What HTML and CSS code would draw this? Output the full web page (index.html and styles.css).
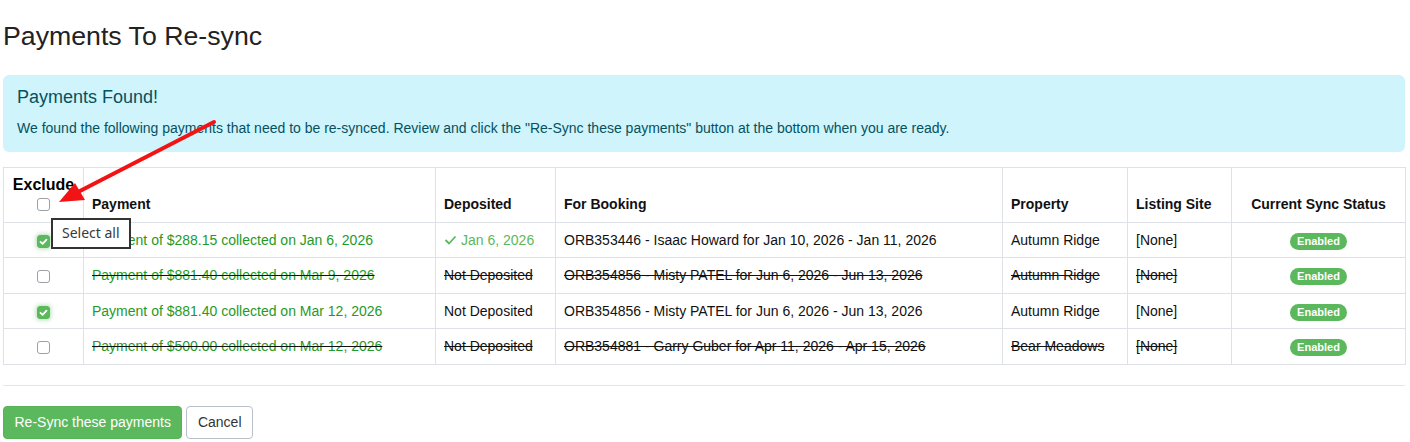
FILE: index.html
```html
<!DOCTYPE html>
<html lang="en">
<head>
<meta charset="utf-8">
<title>Payments To Re-sync</title>
<link rel="stylesheet" href="styles.css">
</head>
<body>
<div class="page">
  <h2 class="title">Payments To Re-sync</h2>

  <div class="alert">
    <h4 class="alert-heading">Payments Found!</h4>
    <p class="alert-text">We found the following payments that need to be re-synced. Review and click the "Re-Sync these payments" button at the bottom when you are ready.</p>
  </div>

  <table class="grid">
    <colgroup>
      <col class="c-ex"><col class="c-pay"><col class="c-dep"><col class="c-book"><col class="c-prop"><col class="c-site"><col class="c-stat">
    </colgroup>
    <thead>
      <tr>
        <th class="th-center"><span class="ex-label">Exclude</span><input type="checkbox" class="chk chk-head"></th>
        <th>Payment</th>
        <th>Deposited</th>
        <th>For Booking</th>
        <th>Property</th>
        <th>Listing Site</th>
        <th class="th-center">Current Sync Status</th>
      </tr>
    </thead>
    <tbody>
      <tr>
        <td class="td-center"><input type="checkbox" class="chk" checked></td>
        <td><span class="pay">Payment of $288.15 collected on Jan 6, 2026</span></td>
        <td><span class="dep-ok"><svg class="tick" width="13" height="10" viewBox="0 0 13 10"><polyline points="1.5,5 5,8.5 11.5,1.5" fill="none" stroke="currentColor" stroke-width="1.8"/></svg>Jan 6, 2026</span></td>
        <td>ORB353446 - Isaac Howard for Jan 10, 2026 - Jan 11, 2026</td>
        <td>Autumn Ridge</td>
        <td>[None]</td>
        <td class="td-center"><span class="badge">Enabled</span></td>
      </tr>
      <tr>
        <td class="td-center"><input type="checkbox" class="chk"></td>
        <td class="struck"><span class="pay">Payment of $881.40 collected on Mar 9, 2026</span></td>
        <td class="struck">Not Deposited</td>
        <td class="struck">ORB354856 - Misty PATEL for Jun 6, 2026 - Jun 13, 2026</td>
        <td class="struck">Autumn Ridge</td>
        <td class="struck">[None]</td>
        <td class="td-center"><span class="badge">Enabled</span></td>
      </tr>
      <tr>
        <td class="td-center"><input type="checkbox" class="chk" checked></td>
        <td><span class="pay">Payment of $881.40 collected on Mar 12, 2026</span></td>
        <td>Not Deposited</td>
        <td>ORB354856 - Misty PATEL for Jun 6, 2026 - Jun 13, 2026</td>
        <td>Autumn Ridge</td>
        <td>[None]</td>
        <td class="td-center"><span class="badge">Enabled</span></td>
      </tr>
      <tr>
        <td class="td-center"><input type="checkbox" class="chk"></td>
        <td class="struck"><span class="pay">Payment of $500.00 collected on Mar 12, 2026</span></td>
        <td class="struck">Not Deposited</td>
        <td class="struck">ORB354881 - Garry Guber for Apr 11, 2026 - Apr 15, 2026</td>
        <td class="struck">Bear Meadows</td>
        <td class="struck">[None]</td>
        <td class="td-center"><span class="badge">Enabled</span></td>
      </tr>
    </tbody>
  </table>

  <hr class="rule">

  <div class="actions">
    <button class="btn btn-success">Re-Sync these payments</button>
    <button class="btn btn-default">Cancel</button>
  </div>

  <div class="tooltip">Select all</div>

  <svg class="arrow" width="240" height="220" viewBox="0 0 240 220">
    <line x1="214" y1="122" x2="78" y2="192" stroke="#f21414" stroke-width="4" stroke-linecap="round"/>
    <polygon points="59,202 75,183 85,200" fill="#f21414"/>
  </svg>
</div>
</body>
</html>
```

FILE: styles.css
```css
* { box-sizing: border-box; }

html, body {
  margin: 0;
  padding: 0;
  background: #fff;
}

body {
  font-family: "Liberation Sans", Arial, sans-serif;
  font-size: 14px;
  line-height: 20px;
  color: #111;
}

.page {
  position: relative;
  padding: 21px 5px 0 3px;
}

.title {
  margin: 0 0 23px;
  font-size: 26.7px;
  line-height: 30.8px;
  font-weight: normal;
  color: #222;
}

.alert {
  background: #cff4fc;
  color: #055160;
  border-radius: 6px;
  padding: 13px 14px 14px;
  margin-bottom: 15px;
}

.alert-heading {
  margin: 0 0 10px;
  font-size: 18px;
  line-height: 1.1;
  font-weight: normal;
}

.alert-text {
  margin: 0;
  font-size: 14px;
  line-height: 20px;
}

.grid {
  width: 100%;
  border-collapse: collapse;
  table-layout: fixed;
  border: 1px solid #dee2e6;
}

.c-ex { width: 80px; }
.c-pay { width: 352px; }
.c-dep { width: 120px; }
.c-book { width: 447px; }
.c-prop { width: 125px; }
.c-site { width: 104px; }
.c-stat { width: 174px; }

.grid th,
.grid td {
  border: 1px solid #dee2e6;
  padding: 7px 8px;
  line-height: 20.5px;
  text-align: left;
  vertical-align: middle;
  white-space: nowrap;
}

.grid th {
  font-weight: bold;
  vertical-align: bottom;
  padding: 7px 8px 8px;
  line-height: 20px;
}

.grid .th-center,
.grid .td-center {
  text-align: center;
}

.ex-label {
  display: block;
  font-size: 16px;
  line-height: 20px;
  color: #000;
}

.chk {
  -webkit-appearance: none;
  appearance: none;
  width: 13px;
  height: 13px;
  margin: 0;
  border: 1px solid #9aa0a6;
  border-radius: 3px;
  background: #fff;
  vertical-align: middle;
  display: inline-block;
}

.chk:checked {
  background-color: #5cb85c;
  border-color: #5cb85c;
  box-shadow: 0 0 4px 1px rgba(92, 184, 92, 0.45);
  background-image: url("data:image/svg+xml;utf8,<svg xmlns='http://www.w3.org/2000/svg' viewBox='0 0 13 13'><polyline points='3.5,6.8 5.6,8.8 9.5,4.6' fill='none' stroke='white' stroke-width='1.8' stroke-linecap='round' stroke-linejoin='round'/></svg>");
  background-size: 13px 13px;
  background-position: -1px -1px;
}

.chk-head {
  display: block;
  margin: 3px auto 3px;
}

.pay {
  color: #1f9a27;
}

.struck {
  text-decoration: line-through;
  text-decoration-color: #111;
}

.dep-ok {
  color: #5cb85c;
  display: inline-flex;
  align-items: center;
  gap: 4px;
}

.tick {
  display: block;
  color: #5cb85c;
}

.badge {
  display: inline-block;
  background: #5cb85c;
  color: #fff;
  font-size: 11px;
  font-weight: bold;
  line-height: 17px;
  padding: 0 7px;
  border-radius: 9px;
  vertical-align: middle;
}

.rule {
  border: 0;
  border-top: 1px solid #e5e5e5;
  margin: 20px 0 20px;
}

.actions {
  display: flex;
  gap: 4px;
}

.btn {
  font-family: "Liberation Sans", Arial, sans-serif;
  font-size: 14px;
  line-height: 19px;
  padding: 6px 10.5px;
  border-radius: 4px;
  border: 1px solid transparent;
  cursor: pointer;
}

.btn-success {
  background: #5cb85c;
  border-color: #56b356;
  color: #fff;
}

.btn-default {
  background: #fff;
  border-color: #b9bfc6;
  color: #333;
}

.tooltip {
  position: absolute;
  left: 51px;
  top: 218px;
  background: #fff;
  border: 2px solid #333;
  color: #3a3a3a;
  padding: 3px 9px 4px;
  font-family: "Noto Sans", "Liberation Sans", sans-serif;
  font-size: 14px;
  line-height: 20px;
}

.arrow {
  position: absolute;
  left: 0;
  top: 0;
  pointer-events: none;
}
```
